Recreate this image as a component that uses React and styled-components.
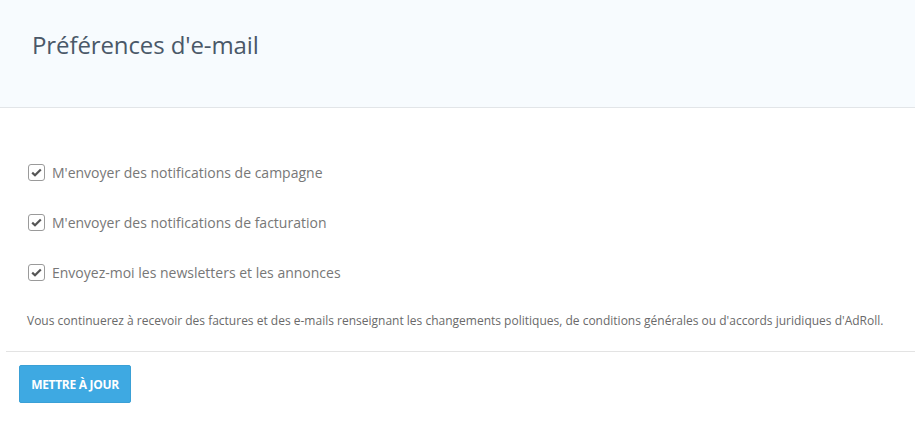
import React from "react";
import styled, { createGlobalStyle } from "styled-components";

const GlobalStyle = createGlobalStyle`
  body {
    margin: 0;
    background: #ffffff;
    font-family: "Open Sans", "Liberation Sans", sans-serif;
  }
`;

const Header = styled.header`
  height: 108px;
  background: #f7fbfe;
  border-bottom: 1px solid #e2e5e8;
  display: flex;
  align-items: center;
  padding-left: 32px;
  padding-bottom: 18px;
  box-sizing: border-box;
`;

const Title = styled.h1`
  margin: 0;
  font-size: 24px;
  font-weight: 400;
  color: #4a5868;
  letter-spacing: -0.1px;
`;

const Body = styled.section`
  padding: 54px 0 0 0;
`;

const Options = styled.div`
  display: flex;
  flex-direction: column;
  gap: 30px;
  padding-left: 28px;
`;

const Option = styled.label`
  display: flex;
  align-items: center;
  gap: 7px;
  height: 20px;
  font-size: 14px;
  color: #777777;
`;

const Box = styled.span`
  width: 15px;
  height: 15px;
  border: 1px solid #9a9a9a;
  border-radius: 3px;
  background: #ffffff;
  display: flex;
  align-items: center;
  justify-content: center;
  box-sizing: content-box;
`;

const Note = styled.p`
  margin: 30px 0 0 27px;
  font-size: 12px;
  color: #6a6a6a;
  line-height: 18px;
`;

const Divider = styled.hr`
  margin: 21px 0 0 6px;
  border: 0;
  border-top: 1px solid #e3e3e3;
`;

const Footer = styled.div`
  padding: 13px 0 0 19px;
`;

const Button = styled.button`
  width: 112px;
  height: 38px;
  background: #3ea9e2;
  border: 1px solid #3aa0d6;
  border-radius: 2px;
  color: #ffffff;
  font-family: "Open Sans", "Liberation Sans", sans-serif;
  font-size: 12px;
  font-weight: 700;
  letter-spacing: -0.3px;
  text-transform: uppercase;
  cursor: pointer;
`;

const Check = () => (
  <svg width="11" height="9" viewBox="0 0 11 9">
    <path d="M1.2 4.6 L4 7.3 L9.8 1.4" fill="none" stroke="#555" strokeWidth="2.2" />
  </svg>
);

const options = [
  "M'envoyer des notifications de campagne",
  "M'envoyer des notifications de facturation",
  "Envoyez-moi les newsletters et les annonces",
];

export default function App() {
  return (
    <>
      <GlobalStyle />
      <Header>
        <Title>Préférences d'e-mail</Title>
      </Header>
      <Body>
        <Options>
          {options.map((text) => (
            <Option key={text}>
              <Box>
                <Check />
              </Box>
              {text}
            </Option>
          ))}
        </Options>
        <Note>
          Vous continuerez à recevoir des factures et des e-mails renseignant les changements politiques, de conditions générales ou d'accords juridiques d'AdRoll.
        </Note>
        <Divider />
        <Footer>
          <Button>Mettre à jour</Button>
        </Footer>
      </Body>
    </>
  );
}
